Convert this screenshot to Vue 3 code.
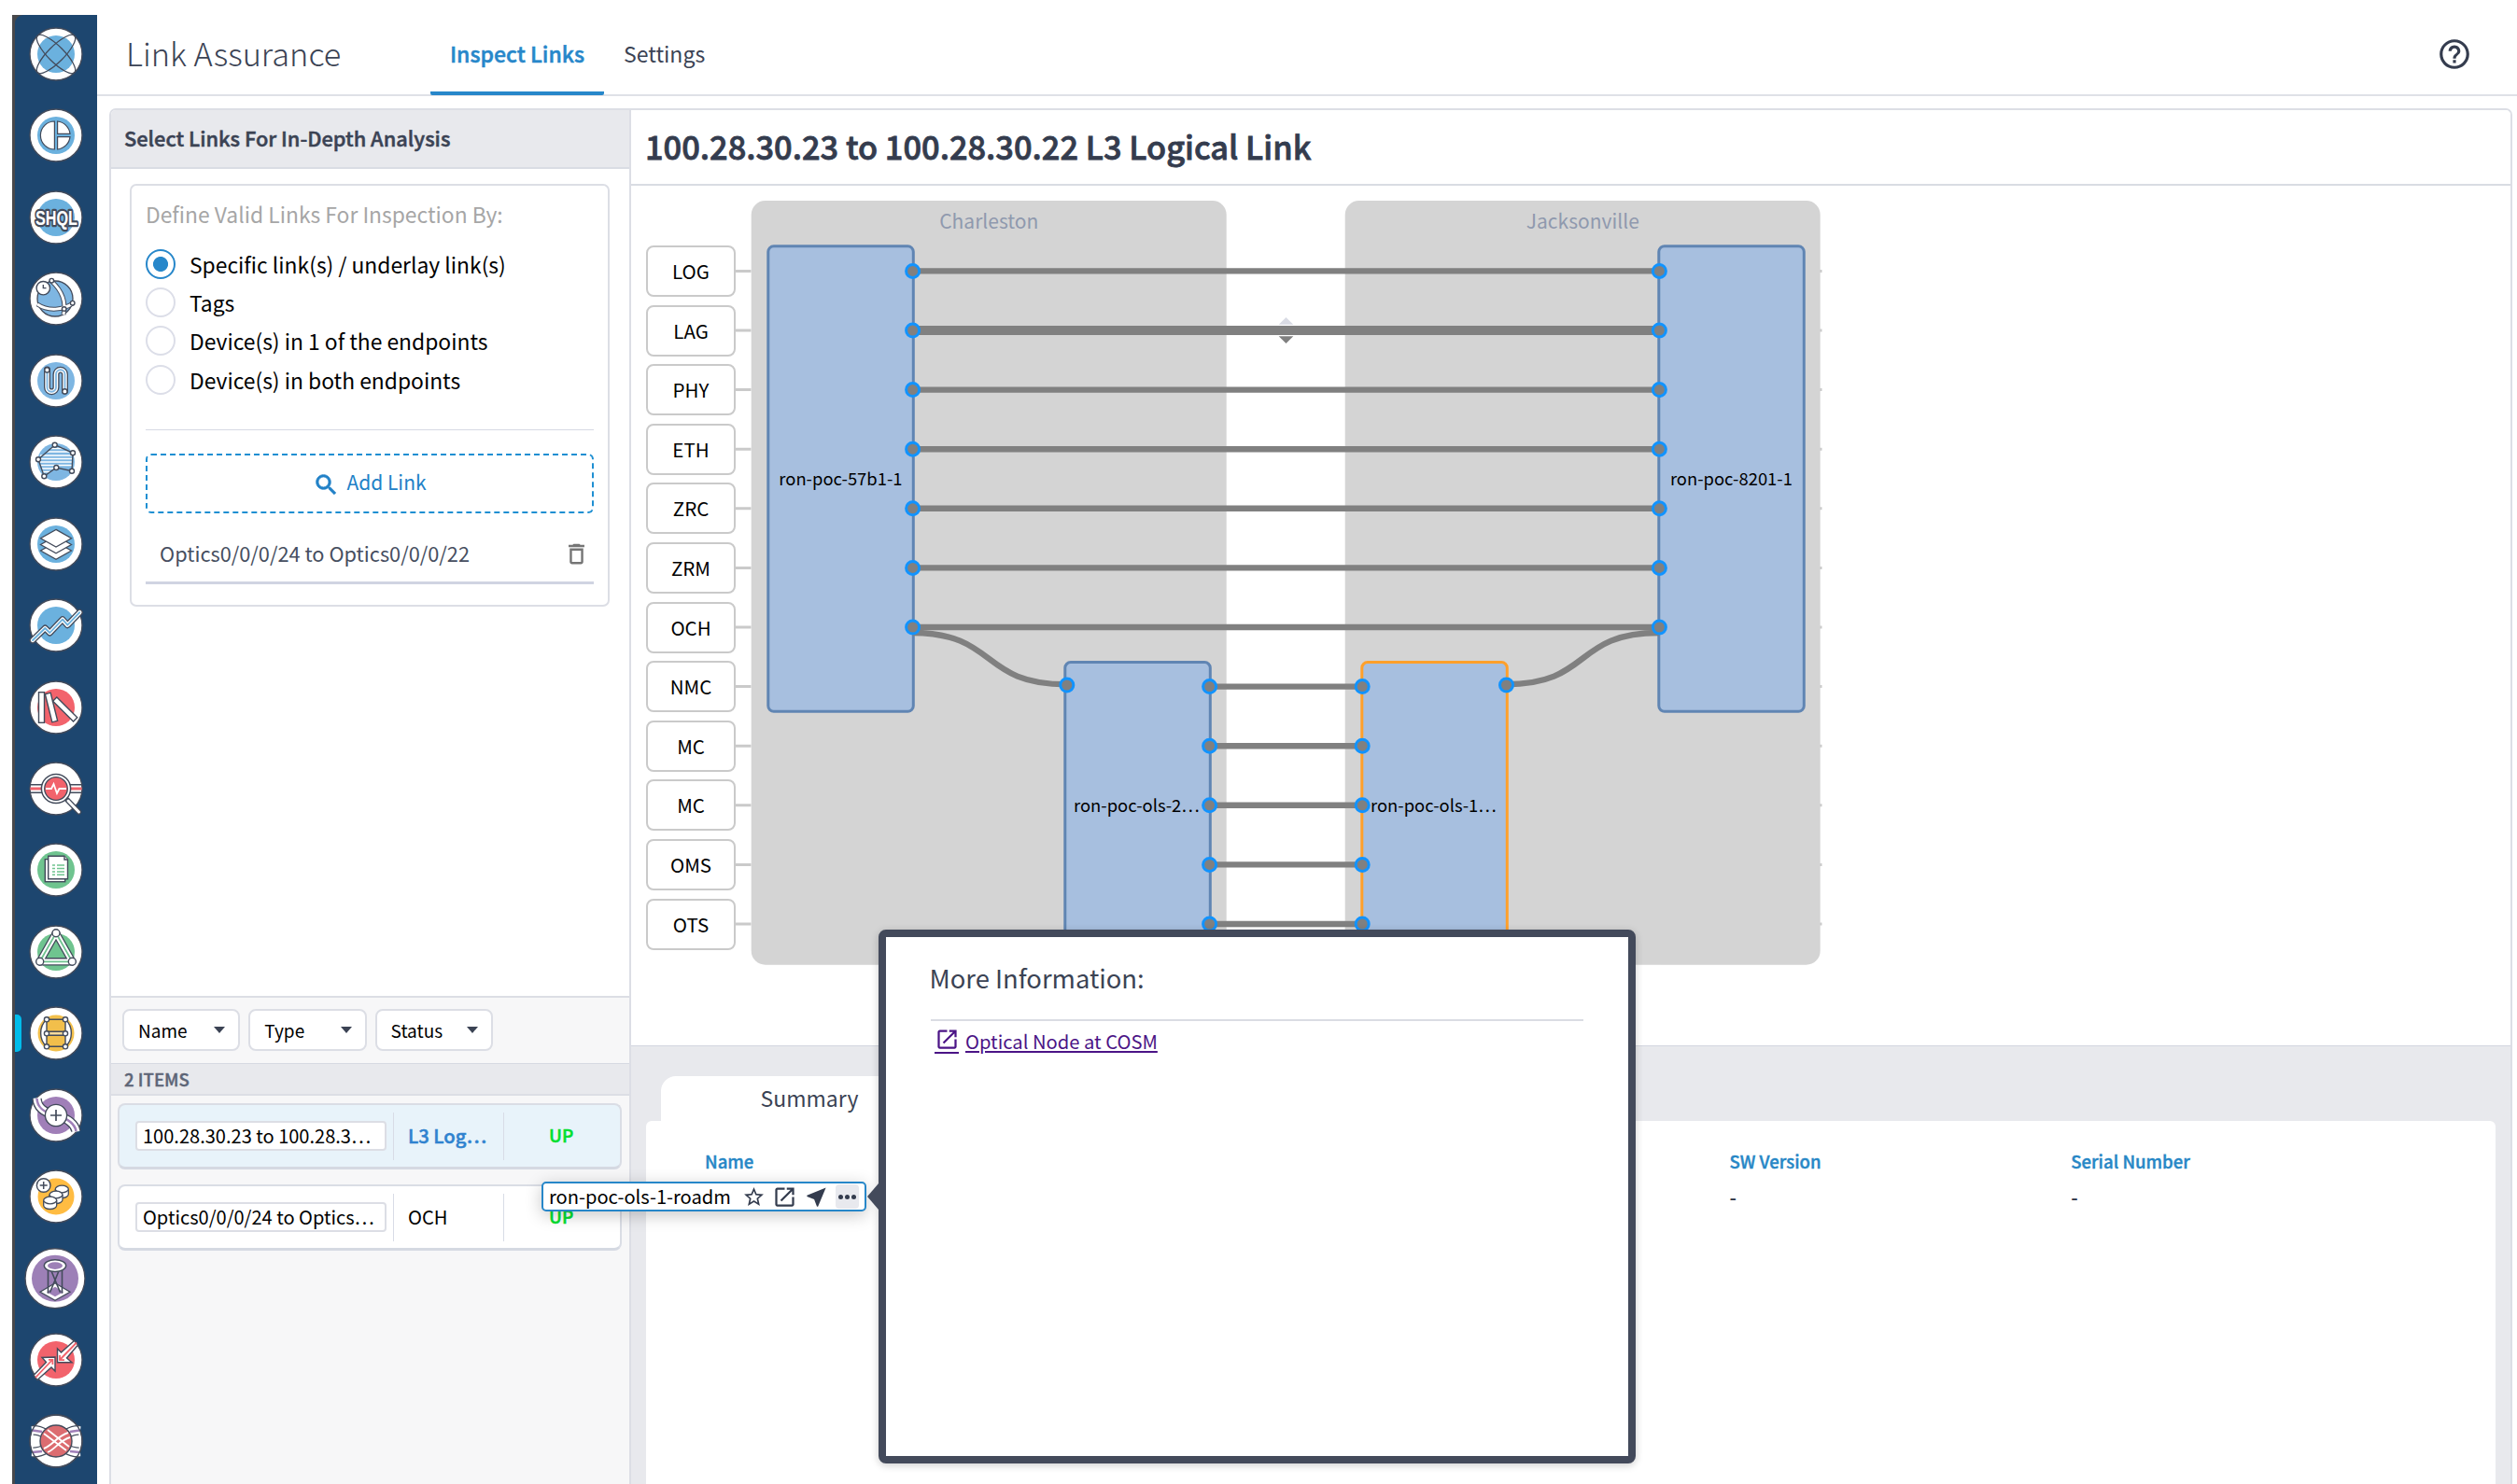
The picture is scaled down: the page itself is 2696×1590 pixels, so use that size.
<script setup>
const INK = '#434b5b'
const disc = (fill, r = 20) => `<circle r="28" fill="#fff" stroke="${INK}" stroke-width="1.4"/><circle r="${r}" fill="${fill}"/>`
const tube = (d, color, w = 8) =>
  `<g fill="none" stroke-linejoin="round" stroke-linecap="round"><path d="${d}" stroke="${INK}" stroke-width="${w}"/><path d="${d}" stroke="#fff" stroke-width="${w - 2.6}"/><path d="${d}" stroke="${color}" stroke-width="1.8"/></g>`
const dots = (pts, r) => pts.map(([x, y]) => `<circle cx="${x}" cy="${y}" r="${r}" fill="#fff" stroke="${INK}" stroke-width="1.4"/>`).join('')
const diamond = (y, h = 9.3) => `<path d="M0 ${y - h}L16.5 ${y}L0 ${y + h}L-16.5 ${y}Z" fill="#fff" stroke="${INK}" stroke-width="1.3"/>`
const drum = (x, y) => `<path d="M${x - 7} ${y}v5.5a7 4 0 0 0 14 0v-5.5" fill="#fff" stroke="${INK}" stroke-width="1.3"/><ellipse cx="${x}" cy="${y}" rx="7" ry="3.8" fill="#fff" stroke="${INK}" stroke-width="1.3"/>`

const BLUE = '#6bb1de'
const RED = '#f2636c'
const GREEN = '#6fc48f'
const PURPLE = '#a07fb8'
const AMBER = '#f2bf4b'

const apps = [
  disc(BLUE) + `<g fill="none" stroke="${INK}" stroke-width="1.3"><ellipse rx="28" ry="8.6" transform="rotate(45)"/><ellipse rx="28" ry="8.6" transform="rotate(-45)"/></g>`,
  disc(BLUE) + `<g fill="#fff" stroke="${INK}" stroke-width="1.2"><path d="M-1.6 -15A15 15 0 0 0 -1.6 15Z"/><path d="M1.6 -15A15 15 0 0 1 15 -1.6H1.6Z"/><path d="M1.6 15A15 15 0 0 0 15 1.6H1.6Z"/></g>`,
  disc(BLUE) + `<text x="-22" y="8" textLength="45" lengthAdjust="spacingAndGlyphs" font-family="Liberation Sans" font-weight="700" font-size="22.5" fill="#fff" stroke="${INK}" stroke-width="4.6" paint-order="stroke" stroke-linejoin="round">SHQL</text>`,
  disc('#fff') + `<g fill="none" stroke="${INK}" stroke-width="1.3"><circle cx="-1" r="19" fill="#7eb6e2"/><path d="M-5 -19C7 -8 11 4 8 17M-20 6C-8 14 8 12 18 5" stroke="${INK}" stroke-width="5"/><path d="M-5 -19C7 -8 11 4 8 17M-20 6C-8 14 8 12 18 5" stroke="#fff" stroke-width="3"/></g>` + dots([[-4.7, -19.3], [17.7, 4.7], [8.7, 11]], 2.3) + dots([[-13.7, -11.3]], 7.2) + `<path d="M-13.7 -15V-11.3H-10.5" fill="none" stroke="${INK}" stroke-width="1.3"/>`,
  disc('#7eb6e2') + tube('M-9.5 -12V7a4.75 4.75 0 0 0 9.5 0V-7a4.75 4.75 0 0 1 9.5 0V11', '#7eb6e2', 7) + dots([[-9.6, -11.6], [9.4, 11.4]], 2.6),
  disc('#7eb6e2') + `<path d="M-17 -7H18M-18 -3.5H18M-18 0H18M-17 3.5H17M-15 7H-2M-14 10.5H-6M-10 -11H14M-6 -14.5H8" stroke="#fff" stroke-width="1.4"/><path d="M-1.3 -18.3L18 -9.7L17 9.7L.3 6L-12.7 15.3L-19 -2.7Z" fill="none" stroke="${INK}" stroke-width="1.4"/>` + dots([[-1.3, -18.3], [18, -9.7], [17, 9.7], [0.3, 6], [-12.7, 15.3], [-19, -2.7]], 2.5),
  disc(BLUE) + diamond(7) + diamond(0.5) + diamond(-6.3),
  disc(BLUE) + tube('M-25 16L-11.7 3L-6.7 8L7 -6.3L12.3 -.3L25.3 -13.8', BLUE, 7),
  disc(RED) + `<g fill="#fff" stroke="${INK}" stroke-width="1.4"><rect x="-18.5" y="-16.3" width="6" height="32.6"/><rect x="-3" y="-15.5" width="6" height="31" transform="translate(-5 0) rotate(-14)"/><rect x="-3" y="-15.5" width="6" height="31" transform="translate(9.7 2) rotate(-45)"/></g>`,
  disc('#fff') + `<path d="M-27.7 -4.3H27.7M-27.7 4.3H27.7" stroke="${INK}" stroke-width="1.4"/><path d="M-27.5 0H27.5" stroke="${RED}" stroke-width="3"/><path d="M12 12L24.5 25" stroke="${INK}" stroke-width="5.5" stroke-linecap="round"/><path d="M13 13L24.5 25" stroke="#fff" stroke-width="3" stroke-linecap="round"/><circle r="15.6" fill="#fff" stroke="${INK}" stroke-width="1.5"/><circle r="12.3" fill="${RED}" stroke="${INK}" stroke-width="1.3"/><path d="M-11 0H-5L-2.5 -5L1 5L3.5 0H11" fill="none" stroke="#fff" stroke-width="1.8"/>`,
  disc(GREEN) + `<g fill="#fff" stroke="${INK}" stroke-width="1.4"><rect x="-11.7" y="-11.3" width="21.4" height="24"/><path d="M-8.3 -14.7H9L12.5 -11V9.7H-8.3Z"/><path d="M9 -14.7V-11H12.5"/></g><path d="M-4 -5H-1M1 -5H9M-4 -1.5H-1M1 -1.5H9M-4 2H-1M1 2H9M-4 5.3H-1M1 5.3H9" stroke="${GREEN}" stroke-width="1.5"/>`,
  disc(GREEN) + tube('M-17.3 10.3L0 -20.3L17.3 10.3Z', GREEN, 8.4) + dots([[0, -20.3], [-17.3, 10.3], [17.3, 10.3]], 4),
  disc(AMBER, 19.5) + `<g fill="#fff" stroke="${INK}" stroke-width="1.4"><path d="M-10 -14.7C-18.5 -7 -18.5 7 -10 14.3Z"/><path d="M10 -14.7C18.5 -7 18.5 7 10 14.3Z"/><path d="M-10 -1.8H10V2.2H-10Z" fill="#f7dc9c"/><path d="M-10 -14.7H10M-10 14.3H10"/></g>` + dots([[-10, -14.7], [10, -14.7], [-10, 0.3], [10, 0.3], [-10, 14.3], [10, 14.3]], 2.6),
  disc(PURPLE) + `<g fill="none"><path d="M-20.5 -18C-20 -8 -13 -3 0 0S20.5 10 21.5 17" stroke="${INK}" stroke-width="10.5"/><path d="M-20.5 -18.5C-20 -8 -13 -3 0 0S20.5 10 21.5 17.5" stroke="#fff" stroke-width="7.8"/><path d="M-20.5 -18C-20 -8 -13 -3 0 0S20.5 10 21.5 17" stroke="${PURPLE}" stroke-width="2.6"/></g>` + dots([[0, 0]], 11.6) + `<path d="M-6 0H6M0 -6V6" stroke="${INK}" stroke-width="1.7"/>`,
  disc('#ffbc42', 19.5) + drum(6.3, -8) + drum(0, -2) + drum(-6.3, 4) + dots([[-13.3, -12]], 7.3) + `<path d="M-17.3 -12H-9.3M-13.3 -16V-8" stroke="${INK}" stroke-width="1.5"/>`,
  `<g transform="translate(-1 -.3)"><circle r="32" fill="#fff" stroke="${INK}" stroke-width="1.4"/><circle r="25" fill="#9d80b7"/><path d="M0 5L16 14.5L0 23.5L-16 14.5Z" fill="#fff" stroke="${INK}" stroke-width="1.3"/><path d="M0 9L9 14.5L0 19.5L-9 14.5Z" fill="#9d80b7"/><path d="M-7.5 -10V16M7.5 -10V16M-4 -8L5.5 15M4 -8L-5.5 15" stroke="${INK}" stroke-width="1.6"/><ellipse cy="-13.6" rx="11.7" ry="6.4" fill="#fff" stroke="${INK}" stroke-width="1.4"/><ellipse cy="-13.6" rx="8" ry="3.8" fill="#9d80b7"/></g>`,
  disc(RED) + `<g fill="#fff" stroke="${INK}" stroke-width="1.4"><path d="M-1 -3V12L-5 8L-20 21.5L-24 16.5L-10.5 2.5L-15 -2.5Z"/><path d="M1.5 2.7V-12L5.5 -8L19.5 -20.5L23.5 -16L11.5 -2L17 2.7Z"/></g><path d="M-22 19L-4 0M-8 -.2H-3.6V5M22 -18.5L4 0M9 .2H4V-5" fill="none" stroke="${RED}" stroke-width="1.8"/>`,
  disc('#fff') + `<g fill="none"><path d="M-25 -11.5C-18 -12.5 -14 -9 -8 -6M25 -11.5C18 -12.5 14 -9 8 -6M-25 12C-18 12.5 -14 10 -8 7M25 12C18 12.5 14 10 8 7" stroke="${INK}" stroke-width="11"/><path d="M-26 -11.5C-18 -12.5 -14 -9 -8 -6M26 -11.5C18 -12.5 14 -9 8 -6M-26 12C-18 12.5 -14 10 -8 7M26 12C18 12.5 14 10 8 7" stroke="#fff" stroke-width="8.4"/><path d="M-25.3 -11.5L-15 -10M25.3 -11.5L15 -10M-25.3 12L-15 11M25.3 12L15 11" stroke="${PURPLE}" stroke-width="2.4"/></g><circle r="28" fill="none" stroke="${INK}" stroke-width="1.4"/><circle r="17" fill="#dc6c70" stroke="${INK}" stroke-width="1.4"/><path d="M-13 -8L11 10M-9 -12L14 6M-13 8C-3 4 2 -6 13 -9M-9 12C0 8 4 -1 15 -4" fill="none" stroke="#fff" stroke-width="1.9"/>`
]

const options = [
  'Specific link(s) / underlay link(s)',
  'Tags',
  'Device(s) in 1 of the endpoints',
  'Device(s) in both endpoints'
]
const filters = ['Name', 'Type', 'Status']
const links = [
  { name: '100.28.30.23 to 100.28.3…', type: 'L3 Log…', status: 'UP', active: true },
  { name: 'Optics0/0/0/24 to Optics…', type: 'OCH', status: 'UP', active: false }
]
const layers = ['LOG', 'LAG', 'PHY', 'ETH', 'ZRC', 'ZRM', 'OCH', 'NMC', 'MC', 'MC', 'OMS', 'OTS']

// Vertical position of a layer row on the topology canvas
const rowY = (i) => 75.4 + 63.6 * i
const routerRows = [0, 1, 2, 3, 4, 5, 6]
const roadmRows = [7, 8, 9, 10, 11]
</script>

<template>
  <div class="app">
    <nav class="rail">
      <div class="rail-inner">
        <div v-for="(icon, i) in apps" :key="i" class="app-slot" :class="{ active: i === 12 }">
          <svg class="app-icon" viewBox="-30 -30 60 60" v-html="icon"></svg>
        </div>
      </div>
    </nav>

    <main class="main">
      <header class="topbar">
        <h1>Link Assurance</h1>
        <div class="tabs">
          <a class="tab current">Inspect Links</a>
          <a class="tab">Settings</a>
        </div>
        <svg class="help" viewBox="0 0 24 24"><path d="M11 18h2v-2h-2v2zm1-16C6.48 2 2 6.48 2 12s4.48 10 10 10 10-4.48 10-10S17.52 2 12 2zm0 18c-4.41 0-8-3.59-8-8s3.59-8 8-8 8 3.59 8 8-3.59 8-8 8zm0-14c-2.21 0-4 1.79-4 4h2c0-1.1.9-2 2-2s2 .9 2 2c0 2-3 1.75-3 5h2c0-2.25 3-2.5 3-5 0-2.21-1.79-4-4-4z" /></svg>
      </header>

      <div class="workspace">
        <aside class="side">
          <div class="side-head">Select Links For In-Depth Analysis</div>
          <div class="side-form">
            <section class="define">
              <p class="define-title">Define Valid Links For Inspection By:</p>
              <label v-for="(o, i) in options" :key="o" class="option">
                <span class="radio" :class="{ on: i === 0 }"></span><span>{{ o }}</span>
              </label>
              <hr />
              <button class="add">
                <svg viewBox="0 0 24 24"><path d="M15.5 14h-.79l-.28-.27C15.41 12.59 16 11.11 16 9.5 16 5.91 13.09 3 9.5 3S3 5.91 3 9.5 5.91 16 9.5 16c1.61 0 3.09-.59 4.23-1.57l.27.28v.79l5 4.99L20.49 19l-4.99-5zm-6 0C7.01 14 5 11.99 5 9.5S7.01 5 9.5 5 14 7.01 14 9.5 11.99 14 9.5 14z" /></svg>
                <span>Add Link</span>
              </button>
              <div class="picked">
                <span>Optics0/0/0/24 to Optics0/0/0/22</span>
                <svg viewBox="0 0 24 24"><path d="M6 19c0 1.1.9 2 2 2h8c1.1 0 2-.9 2-2V7H6v12zM8 9h8v10H8V9zm7.5-5l-1-1h-5l-1 1H5v2h14V4z" /></svg>
              </div>
            </section>
          </div>
          <div class="filters">
            <button v-for="f in filters" :key="f" class="filter"><span>{{ f }}</span><i></i></button>
          </div>
          <div class="count">2 ITEMS</div>
          <div class="cards">
            <div v-for="l in links" :key="l.name" class="card" :class="{ active: l.active }">
              <span class="card-name">{{ l.name }}</span>
              <span class="card-type">{{ l.type }}</span>
              <span class="card-status">{{ l.status }}</span>
            </div>
          </div>
        </aside>

        <section class="content">
          <h2>100.28.30.23 to 100.28.30.22 L3 Logical Link</h2>
          <div class="canvas">
            <div class="layers">
              <div v-for="(l, i) in layers" :key="i" class="layer">{{ l }}</div>
            </div>
            <svg class="topology" width="1170" height="820" viewBox="0 0 1170 820">
              <g class="stub">
                <path v-for="(l, i) in layers" :key="i" :d="`M0 ${rowY(i)}H16.5M1155 ${rowY(i)}H1163.5`" />
              </g>
              <rect class="site" x="16.7" y="0" width="509" height="818.7" rx="15" />
              <rect class="site" x="652.7" y="0" width="509" height="818.7" rx="15" />
              <text class="site-name" x="271.3" y="29.7">Charleston</text>
              <text class="site-name" x="907.3" y="29.7">Jacksonville</text>
              <rect class="node" x="34.8" y="48.8" width="155.5" height="498.4" rx="6" />
              <rect class="node" x="988.8" y="48.8" width="155.5" height="498.4" rx="6" />
              <rect class="node" x="352.8" y="494.6" width="155.5" height="308" rx="6" />
              <rect class="node selected" x="670.8" y="494.6" width="155.5" height="308" rx="6" />
              <g class="wire">
                <path v-for="r in routerRows" :key="r" :class="{ thick: r === 1 }" :d="`M189 ${rowY(r)}H989`" />
                <path v-for="r in roadmRows" :key="r" :d="`M507 ${rowY(r)}H670`" />
                <path d="M189 463C281 463 261 518.3 354 518.3" />
                <path d="M989 463C897 463 917 518.3 825 518.3" />
              </g>
              <path d="M581.7 132.7L589.5 125L597.3 132.7Z" fill="#d9dbe4" />
              <path d="M581.7 145.3L589.5 153L597.3 145.3Z" fill="#808080" />
              <g class="port">
                <template v-for="r in routerRows" :key="r">
                  <circle cx="189.6" :cy="rowY(r)" r="7" /><circle cx="989.4" :cy="rowY(r)" r="7" />
                </template>
                <template v-for="r in roadmRows" :key="r">
                  <circle cx="507.6" :cy="rowY(r)" r="7" /><circle cx="671.2" :cy="rowY(r)" r="7" />
                </template>
                <circle cx="354.8" cy="519" r="7" />
                <circle cx="825.5" cy="519" r="7" />
              </g>
              <text class="node-name" x="112.4" y="305">ron-poc-57b1-1</text>
              <text class="node-name" x="1066.4" y="305">ron-poc-8201-1</text>
              <text class="node-name" x="429.4" y="655">ron-poc-ols-2…</text>
              <text class="node-name" x="747.4" y="655">ron-poc-ols-1…</text>
            </svg>
          </div>
          <div class="details">
            <div class="details-tab">Summary</div>
            <div class="sheet">
              <div class="col"><b>Name</b></div>
              <div class="col"></div>
              <div class="col"></div>
              <div class="col"><b>SW Version</b><span>-</span></div>
              <div class="col"><b>Serial Number</b><span>-</span></div>
            </div>
          </div>
        </section>
      </div>
    </main>

    <div class="chip">
      <span class="chip-name">ron-poc-ols-1-roadm</span>
      <svg class="c-star" viewBox="0 0 24 24"><path d="M22 9.24l-7.19-.62L12 2 9.19 8.63 2 9.24l5.46 4.73L5.82 21 12 17.27 18.18 21l-1.63-7.03L22 9.24zM12 15.4l-3.76 2.27 1-4.28-3.32-2.88 4.38-.38L12 6.1l1.71 4.04 4.38.38-3.32 2.88 1 4.28L12 15.4z" /></svg>
      <svg class="c-open" viewBox="0 0 24 24"><path d="M19 19H5V5h7V3H5c-1.11 0-2 .9-2 2v14c0 1.1.89 2 2 2h14c1.1 0 2-.9 2-2v-7h-2v7zM14 3v2h3.59l-9.83 9.83 1.41 1.41L19 6.41V10h2V3h-7z" /></svg>
      <svg class="c-near" viewBox="0 0 24 24"><path d="M21 3L3 10.53v.98l6.84 2.65L12.48 21h.98L21 3z" /></svg>
      <span class="c-more"><i></i><i></i><i></i></span>
    </div>

    <div class="popup">
      <h3>More Information:</h3>
      <a class="popup-link">
        <span class="popup-icon"><svg viewBox="0 0 24 24"><path d="M19 19H5V5h7V3H5c-1.11 0-2 .9-2 2v14c0 1.1.89 2 2 2h14c1.1 0 2-.9 2-2v-7h-2v7zM14 3v2h3.59l-9.83 9.83 1.41 1.41L19 6.41V10h2V3h-7z" /></svg></span>
        <span class="popup-text">Optical Node at COSM</span>
      </a>
    </div>
  </div>
</template>

<style>
body { background: #fff; }
</style>

<style scoped>
* { box-sizing: border-box; }
.app {
  position: relative;
  display: flex;
  width: 2696px;
  height: 1590px;
  padding: 16px 0 0 13px;
  overflow: hidden;
  background: #fff;
  color: #000;
  font-family: "Noto Sans CJK JP", "Noto Sans CJK SC", "Open Sans", sans-serif;
  font-size: 23px;
  line-height: 32px;
}
h1, h2, h3, p { margin: 0; font-weight: 400; }
button { font: inherit; color: inherit; padding: 0; background: #fff; }

.rail { flex: none; width: 91px; padding-left: 3px; background: #48484b; }
.rail-inner {
  display: flex;
  flex-direction: column;
  align-items: center;
  gap: 27.45px;
  height: 100%;
  padding-top: 12px;
  background: #1d466f;
  border-top-left-radius: 9px;
  overflow: hidden;
}
.app-slot { position: relative; flex: none; display: flex; justify-content: center; width: 100%; height: 60px; }
.app-slot.active::before {
  content: "";
  position: absolute;
  left: 0;
  top: 10px;
  width: 7px;
  height: 40px;
  border-radius: 0 5px 5px 0;
  background: #00bceb;
}
.app-icon { width: 60px; height: 60px; overflow: visible; }

.main { flex: 1; display: flex; flex-direction: column; min-width: 0; }
.topbar { flex: none; display: flex; align-items: stretch; height: 87px; border-bottom: 2px solid #dfe1e7; }
h1 { width: 357px; padding-left: 31px; font-size: 34.3px; font-weight: 300; line-height: 80px; color: #3b4354; white-space: nowrap; }
.tabs { display: flex; }
.tab { padding: 0 21px; line-height: 82px; color: #3b4354; height: 86px; }
.tab.current { color: #2787ca; font-weight: 500; -webkit-text-stroke: .5px; border-bottom: 4px solid #2787ca; border-radius: 0 0 2px 2px; }
.help { width: 38px; height: 38px; margin: 23px 48px 0 auto; fill: #343c4e; }

.workspace {
  flex: 1;
  display: flex;
  width: 2574px;
  margin: 13px 0 0 13px;
  border: 2px solid #dcdee5;
  border-bottom: 0;
  border-radius: 7px 7px 0 0;
  min-height: 0;
  overflow: hidden;
}
.side { flex: none; width: 557px; display: flex; flex-direction: column; border-right: 2px solid #dcdee5; background: #f7f7f8; }
.side-head { flex: none; height: 63px; padding-left: 14px; line-height: 60px; font-size: 21.8px; font-weight: 500; -webkit-text-stroke: .5px; color: #3b4354; background: #e8e9ed; border-bottom: 2px solid #d9dce4; }
.side-form { flex: none; height: 888px; padding: 16px 21px 0 20px; background: #fff; border-bottom: 2px solid #dcdee5; }
.define { height: 453px; padding: 14px 15px 0; border: 2px solid #dcdee5; border-radius: 7px; font-size: 22.85px; }
.define-title { line-height: 32px; margin-bottom: 17px; color: #a6a6a6; white-space: nowrap; }
.option { display: flex; align-items: center; gap: 15px; height: 41.4px; white-space: nowrap; }
.radio { flex: none; width: 32px; height: 32px; border: 2px solid #dcdee8; border-radius: 50%; }
.radio.on { border-color: #2787ca; background: radial-gradient(circle, #2787ca 7.6px, transparent 8.4px); }
hr { height: 1.5px; margin: 32px 0 24.5px; border: 0; background: #d6d9e4; }
.add {
  display: flex;
  align-items: center;
  justify-content: center;
  gap: 7px;
  width: 100%;
  height: 64px;
  border: 2px dashed #1e8fd2;
  border-radius: 6px;
  color: #2181c7;
  font-size: 21px;
}
.add span { margin-top: -3px; }
.add svg { width: 29px; height: 29px; margin-top: 3px; fill: #2181c7; stroke: #2181c7; stroke-width: .6; }
.picked { display: flex; align-items: center; justify-content: space-between; height: 76px; padding: 14px 4px 0 15px; border-bottom: 3px solid #d0d4e2; font-size: 21.75px; color: #464e60; }
.picked svg { width: 29px; height: 29px; fill: #757575; }

.filters { flex: none; display: flex; gap: 9px; height: 70px; padding: 12px 0 0 12px; }
.filter { display: flex; align-items: center; justify-content: space-between; width: 126.3px; height: 45px; padding: 0 14px 0 15px; border: 2px solid #dcdee5; border-radius: 8px; font-size: 19px; }
.filter i { border: 6px solid transparent; border-top: 7px solid #3b4354; border-bottom: 0; }
.count { flex: none; height: 35px; padding-left: 14px; line-height: 31px; font-size: 18.6px; font-weight: 500; -webkit-text-stroke: .4px; color: #5d6577; background: #e8e9ed; border-top: 1px solid #d6d9e2; border-bottom: 2px solid #dcdee5; }
.cards { display: flex; flex-direction: column; gap: 16.4px; padding: 8px 8px 0 7px; }
.card { display: flex; align-items: center; height: 71px; padding-left: 17px; font-size: 20.2px; background: #fff; border: 2px solid #dadde5; border-bottom-width: 3px; border-bottom-color: #d5d9e2; border-radius: 8px; }
.card.active { background: #e8f3fa; }
.card-name { width: 269px; height: 32px; padding-left: 6px; line-height: 27px; font-size: 20.05px; background: #fff; border: 2px solid #dcdee5; border-radius: 4px; white-space: nowrap; }
.card-type { width: 118px; height: 51px; margin-left: 7px; padding-left: 15px; line-height: 49px; border-left: 1px solid #d8dce6; }
.card-status { flex: 1; height: 51px; padding-left: 48px; line-height: 48px; border-left: 1px solid #d8dce6; font-size: 19px; font-weight: 500; -webkit-text-stroke: .5px; color: #00df2e; }
.card.active .card-type { font-weight: 500; -webkit-text-stroke: .5px; color: #2f82cf; }

.content { flex: 1; display: flex; flex-direction: column; min-width: 0; background: #fff; }
h2 { flex: none; height: 81px; padding-left: 15px; line-height: 77px; font-size: 34.4px; font-weight: 500; -webkit-text-stroke: .8px; color: #343c4e; border-bottom: 2px solid #d9dce3; }
.canvas { flex: none; display: flex; height: 922px; padding: 16px 0 0 16px; border-bottom: 1px solid #d3d6df; }
.layers { display: flex; flex-direction: column; gap: 8.6px; width: 96px; padding-top: 48px; }
.layer { flex: none; height: 55px; border: 2px solid #cacaca; border-radius: 8px; text-align: center; line-height: 50px; font-size: 20.5px; }
.topology { flex: none; display: block; font-family: inherit; }
.stub path { stroke: #cacaca; stroke-width: 3; }
.site { fill: #d4d4d4; }
.site-name { font-size: 21px; fill: #8f99ae; text-anchor: middle; }
.node { fill: #a7bfdf; stroke: #6085b3; stroke-width: 3; }
.node.selected { stroke: #ffa02b; }
.node-name { font-size: 18.4px; text-anchor: middle; }
.wire path { fill: none; stroke: #808080; stroke-width: 6.4; }
.wire .thick { stroke-width: 9.8; }
.port circle { fill: #808080; stroke: #1193ff; stroke-width: 3; }

.details { flex: 1; padding: 32px 16px 0; background: #e8e9ed; }
.details-tab { width: 318px; height: 48px; margin-left: 16px; background: #fff; border-radius: 16px 16px 0 0; text-align: center; line-height: 46px; color: #3b4354; }
.sheet { display: flex; height: 400px; padding: 27px 0 0 63px; background: #fff; border-radius: 6px 6px 0 0; }
.col { width: 365.8px; display: flex; flex-direction: column; gap: 6px; font-size: 18.6px; color: #2b3344; }
.col b { font-weight: 500; -webkit-text-stroke: .4px; color: #2787c6; }
.col span { font-size: 21px; font-weight: 500; }

.chip {
  position: absolute;
  left: 580px;
  top: 1266px;
  display: flex;
  align-items: center;
  width: 348px;
  height: 32px;
  padding-left: 6px;
  border: 2px solid #2787c9;
  border-radius: 5px;
  background: #fff;
  box-shadow: 0 4px 18px rgba(0, 0, 0, .22);
}
.chip-name { width: 205px; font-size: 20.1px; line-height: 28px; white-space: nowrap; }
.chip svg { flex: none; fill: #343c4e; }
.c-star { width: 25px; height: 25px; margin-left: 2px; }
.c-open { width: 27px; height: 27px; margin-left: 7px; }
.c-near { width: 27px; height: 27px; margin-left: 7px; }
.c-more { display: flex; align-items: center; justify-content: center; gap: 2px; width: 25px; height: 26px; margin-left: 7px; border-radius: 4px; background: #e8e9ee; }
.c-more i { width: 5px; height: 5px; border-radius: 50%; background: #343c4e; }

.popup {
  position: absolute;
  left: 941px;
  top: 996px;
  width: 811px;
  height: 572px;
  padding: 24.5px 48px 0;
  border: 8px solid #434a5b;
  border-radius: 8px;
  background: #fff;
  box-shadow: 0 2px 8px rgba(0, 0, 0, .2);
}
.popup::before {
  content: "";
  position: absolute;
  left: -20px;
  top: 264px;
  border: 14px solid transparent;
  border-left: 0;
  border-right: 12px solid #434a5b;
}
h3 { height: 65.5px; font-size: 27.4px; line-height: 36px; text-indent: -1.5px; color: #3b4354; border-bottom: 2px solid #dadce3; }
.popup-link { display: flex; gap: 7px; padding: 6px 0 0 4px; color: #4b1486; }
.popup-icon { width: 26px; height: 29px; border-bottom: 2px solid #4b1486; }
.popup-icon svg { display: block; width: 27px; height: 27px; fill: #4b1486; }
.popup-text { font-size: 20.2px; text-decoration: underline; }
</style>
